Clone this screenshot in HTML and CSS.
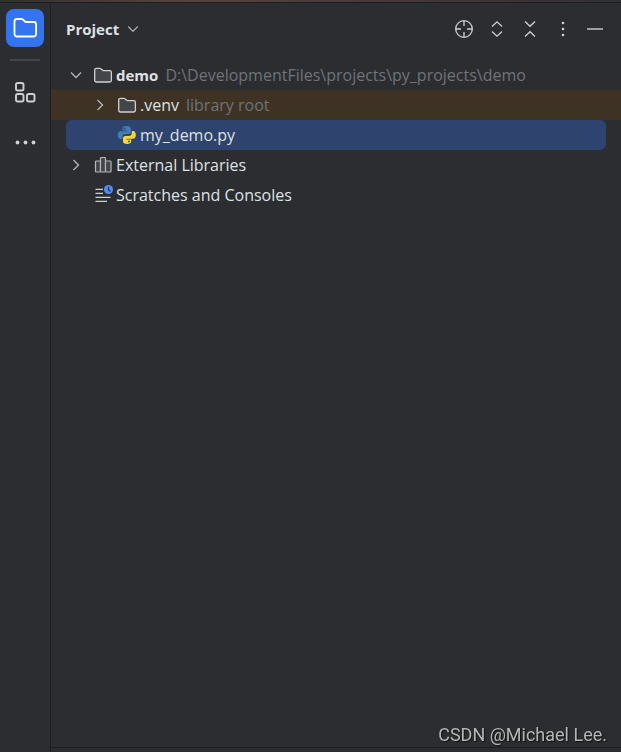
FILE: index.html
```html
<!DOCTYPE html>
<html lang="en">
<head>
    <meta charset="utf-8">
    <title>Project</title>
    <meta name="viewport" content="width=device-width, initial-scale=1">
    <link rel="stylesheet" href="styles.css">
</head>
<body>

<div class="top-strip"></div>

<div class="window">
    <!-- Left tool bar -->
    <nav class="rail">
        <button type="button" class="rail-btn active" aria-label="Project">
            <svg width="26" height="26" viewBox="0 0 26 26" fill="none" stroke="#fff" stroke-width="1.8" stroke-linejoin="round">
                <path d="M2.5 6.5a2.5 2.5 0 0 1 2.5-2.500h4.500a2 2 0 0 1 1.300.5l2.800 2.500h8a2.500 2.500 0 0 1 2.500 2.500v9.500a2.500 2.500 0 0 1-2.500 2.500H5a2.500 2.500 0 0 1-2.500-2.500z"/>
            </svg>
        </button>
        <hr class="rail-line">
        <button type="button" class="rail-btn" aria-label="Structure">
            <svg width="26" height="26" viewBox="0 0 26 26" fill="none" stroke="#ced0d6" stroke-width="1.9">
                <rect x="4" y="4" width="7.500" height="7.500" rx="1.800"/>
                <rect x="4" y="15" width="7.500" height="7.500" rx="1.800"/>
                <rect x="15" y="15" width="7.500" height="7.500" rx="1.800"/>
            </svg>
        </button>
        <button type="button" class="rail-btn" aria-label="More tool windows">
            <svg width="26" height="26" viewBox="0 0 26 26" fill="#ced0d6">
                <circle cx="5.500" cy="13.500" r="1.900"/>
                <circle cx="13.500" cy="13.500" r="1.900"/>
                <circle cx="21.500" cy="13.500" r="1.900"/>
            </svg>
        </button>
    </nav>

    <main class="panel">
        <!-- Panel header -->
        <header class="panel-header">
            <button type="button" class="title-btn">
                Project
                <svg width="12" height="12" viewBox="0 0 12 12" fill="none" stroke="#a5a7ad" stroke-width="1.3"><path d="M1.200 3.500 6 8.300l4.800-4.800"/></svg>
            </button>
            <div class="actions">
                <button type="button" class="icon-btn" aria-label="Select opened file">
                    <svg width="20" height="20" viewBox="0 0 20 20" fill="none" stroke="#ced0d6" stroke-width="1.3">
                        <circle cx="10" cy="10" r="8.300"/>
                        <path d="M10 2v5M10 13v5M2 10h5M13 10h5"/>
                    </svg>
                </button>
                <button type="button" class="icon-btn" aria-label="Expand all">
                    <svg width="20" height="20" viewBox="0 0 20 20" fill="none" stroke="#ced0d6" stroke-width="1.300"><path d="M5 7.500 10 2.800l5 4.700M5 12.500l5 4.700 5-4.700"/></svg>
                </button>
                <button type="button" class="icon-btn" aria-label="Collapse all">
                    <svg width="20" height="20" viewBox="0 0 20 20" fill="none" stroke="#ced0d6" stroke-width="1.300"><path d="m5 2.500 5 4.800 5-4.800M5 17.500l5-4.800 5 4.800"/></svg>
                </button>
                <button type="button" class="icon-btn" aria-label="Options">
                    <svg width="20" height="20" viewBox="0 0 20 20" fill="#ced0d6"><circle cx="10" cy="4" r="1.300"/><circle cx="10" cy="10" r="1.300"/><circle cx="10" cy="16" r="1.300"/></svg>
                </button>
                <button type="button" class="icon-btn" aria-label="Hide">
                    <svg width="20" height="20" viewBox="0 0 20 20" stroke="#9b9da2" stroke-width="2"><path d="M1 10h16"/></svg>
                </button>
            </div>
        </header>

        <!-- Project tree -->
        <ul class="tree">
            <li>
                <div class="row">
                    <span class="twisty"><svg width="14" height="14" viewBox="0 0 14 14"><path d="M2 4.500 7 9.500l5-5"/></svg></span>
                    <svg class="icon folder" viewBox="0 0 20 20"><path d="M1.700 5A1.700 1.700 0 0 1 3.400 3.300h3.500a1.500 1.500 0 0 1 1 .4L10.300 5.700h6.400a1.700 1.700 0 0 1 1.700 1.700v7.900a1.700 1.700 0 0 1-1.700 1.700H3.400a1.700 1.700 0 0 1-1.700-1.700z"/></svg>
                    <span class="name root">demo</span>
                    <span class="hint">D:\DevelopmentFiles\projects\py_projects\demo</span>
                </div>
                <ul>
                    <li class="row nested excluded">
                        <span class="twisty"><svg width="14" height="14" viewBox="0 0 14 14"><path d="m4.500 2 5 5-5 5"/></svg></span>
                        <svg class="icon folder" viewBox="0 0 20 20"><path d="M1.700 5A1.700 1.700 0 0 1 3.400 3.300h3.500a1.500 1.500 0 0 1 1 .4L10.300 5.700h6.400a1.700 1.700 0 0 1 1.700 1.700v7.900a1.700 1.700 0 0 1-1.700 1.700H3.400a1.700 1.700 0 0 1-1.700-1.700z"/></svg>
                        <span class="name">.venv</span>
                        <span class="hint">library root</span>
                    </li>
                    <li class="row nested selected">
                        <span class="twisty"></span>
                        <svg class="icon" viewBox="0 0 20 20">
                            <path fill="#3f7fb5" d="M9.200 1C6.500 1 5.500 2 5.500 3.500v2H10v.8H3.700C1.800 6.300.8 7.800.8 10s1 3.900 2.700 3.900h1.700v-2.100c0-1.700 1.300-2.800 2.800-2.800h3.600c1.400 0 2.300-1 2.300-2.300V3.500C13.900 2 12.300 1 9.200 1z"/>
                            <path fill="#ffd43b" d="M10.200 19c2.700 0 4-1 4-2.500v-2H9.500v-.8h6.400c1.900 0 2.900-1.500 2.900-3.700s-1-3.900-2.700-3.900h-1.300v2.100c0 1.700-1.300 2.800-2.800 2.800H8.300C6.900 11 6 12 6 13.300v3.200c0 1.500 1.300 2.500 4.200 2.500z"/>
                            <circle cx="7.500" cy="3.400" r=".9" fill="#2e436e"/>
                            <circle cx="12" cy="16.500" r=".9" fill="#2e436e"/>
                        </svg>
                        <span class="name">my_demo.py</span>
                    </li>
                </ul>
            </li>
            <li class="row">
                <span class="twisty"><svg width="14" height="14" viewBox="0 0 14 14"><path d="m4.500 2 5 5-5 5"/></svg></span>
                <svg class="icon" viewBox="0 0 20 20" fill="#43454a" stroke="#b4b6bc" stroke-width="1.200">
                    <rect x="2.500" y="6" width="5" height="11" rx=".8"/>
                    <rect x="7.500" y="2.500" width="5" height="14.500" rx=".8"/>
                    <rect x="12.500" y="6" width="5.500" height="11" rx=".8"/>
                </svg>
                <span class="name">External Libraries</span>
            </li>
            <li class="row">
                <span class="twisty"></span>
                <svg class="icon" viewBox="0 0 20 20">
                    <path d="M2.500 4.300H10M2.500 8.300H10M2.500 12.300h15M2.500 16.300H14" stroke="#ced0d6" stroke-width="1.300"/>
                    <circle cx="15.500" cy="4.500" r="4.500" fill="#548af7"/>
                    <path d="M15.500 1.800v3l2 1.700" fill="none" stroke="#25324d" stroke-width="1.200"/>
                </svg>
                <span class="name">Scratches and Consoles</span>
            </li>
        </ul>

        <footer class="panel-footer"></footer>
    </main>
</div>

<div class="watermark">CSDN @Michael Lee.</div>

</body>
</html>
```
FILE: styles.css
```css
* {
    margin: 0;
    padding: 0;
    box-sizing: border-box;
}

body {
    display: flex;
    flex-direction: column;
    min-height: 100vh;
    background: #2b2d30;
    color: #dfe1e5;
    font-family: "Open Sans", "Noto Sans", sans-serif;
    font-size: 16px;
}

button {
    display: flex;
    align-items: center;
    justify-content: center;
    background: none;
    border: none;
    color: inherit;
    font: inherit;
    cursor: pointer;
}

ul {
    list-style: none;
}

.top-strip {
    height: 3px;
    background: linear-gradient(90deg, #30302f, #57433e 30%, #45393a 60%, #303033);
    border-bottom: 1px solid #1e1f22;
}

.window {
    display: flex;
    flex: 1;
}

/* Left tool bar */
.rail {
    display: flex;
    flex-direction: column;
    align-items: center;
    width: 51px;
    padding-top: 6px;
    border-right: 1px solid #1e1f22;
}

.rail-btn {
    width: 38px;
    height: 38px;
    margin-bottom: 12px;
    border-radius: 8px;
}

.rail-btn.active {
    background: #3574f0;
}

.rail-line {
    width: 30px;
    height: 2px;
    margin-bottom: 12px;
    border: none;
    background: #43454a;
}

/* Project panel */
.panel {
    display: flex;
    flex: 1;
    flex-direction: column;
    min-width: 0;
}

.panel-header {
    display: flex;
    align-items: center;
    justify-content: space-between;
    height: 51px;
    padding: 0 15px;
    margin-bottom: 6px;
}

.title-btn {
    gap: 8px;
    font-size: 15px;
    font-weight: bold;
}

.actions {
    display: flex;
    gap: 13px;
}

/* Tree */
.tree {
    flex: 1;
}

.row {
    display: flex;
    align-items: center;
    height: 30px;
    margin: 0 15px;
    white-space: nowrap;
}

.nested {
    padding-left: 24px;
}

.excluded {
    margin: 0;
    padding: 0 39px;
    background: #3d3223;
}

.selected {
    border-radius: 6px;
    background: #2e436e;
}

.twisty {
    display: flex;
    justify-content: center;
    width: 20px;
    margin-right: 7px;
}

.twisty path {
    fill: none;
    stroke: #b4b8bf;
    stroke-width: 1.3;
}

.icon {
    flex: none;
    width: 20px;
    height: 20px;
    margin-right: 3px;
}

.folder {
    fill: #43454a;
    stroke: #ced0d6;
    stroke-width: 1.3;
}

.root {
    font-size: 15px;
    font-weight: bold;
}

.hint {
    margin-left: 7px;
    color: #6f737a;
}

.panel-footer {
    height: 5px;
    border-top: 1px solid #1e1f22;
}

.watermark {
    position: fixed;
    right: 14px;
    bottom: 7px;
    color: #b4b5b6;
    font-family: Roboto, sans-serif;
    font-size: 18px;
    text-shadow: 1px 1px 1px #111;
}
```
